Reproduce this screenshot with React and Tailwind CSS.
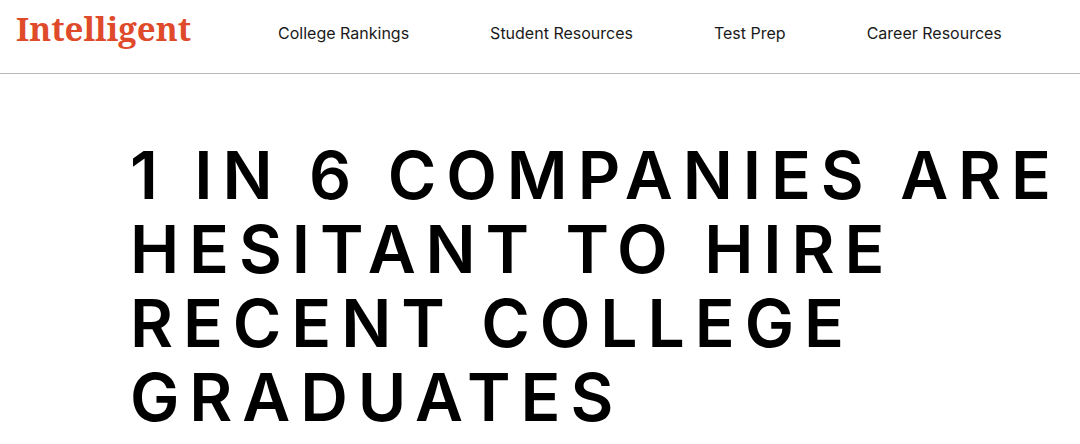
import React from 'react';

const navItems = [
  { label: 'College Rankings', href: '#college-rankings' },
  { label: 'Student Resources', href: '#student-resources' },
  { label: 'Test Prep', href: '#test-prep' },
  { label: 'Career Resources', href: '#career-resources' },
];

const Header = () => {
  return (
    <header className="flex items-center border-b border-[#b8b8b8] bg-white px-4 pt-[9px] pb-6">
      <a href="#home" className="mr-[87px] font-['Noto_Serif','DejaVu_Serif','Liberation_Serif',serif] text-[33px] leading-10 font-bold text-[#df4a2b]">
        Intelligent
      </a>
      <nav className="flex gap-[81px] pt-2">
        {navItems.map(item => (
          <a key={item.label} href={item.href} className="text-base leading-8 whitespace-nowrap text-[#1a1a1a]">
            {item.label}
          </a>
        ))}
      </nav>
    </header>
  );
};

export default function App() {
  return (
    <div className="bg-white font-['Inter','Liberation_Sans',sans-serif] text-black">
      <Header />
      <main className="pt-16 pl-[130px]">
        <h1 className="text-[66px] leading-[74px] font-semibold tracking-[0.15em] uppercase">
          1 in 6 companies are hesitant to hire recent college graduates
        </h1>
      </main>
    </div>
  );
}
